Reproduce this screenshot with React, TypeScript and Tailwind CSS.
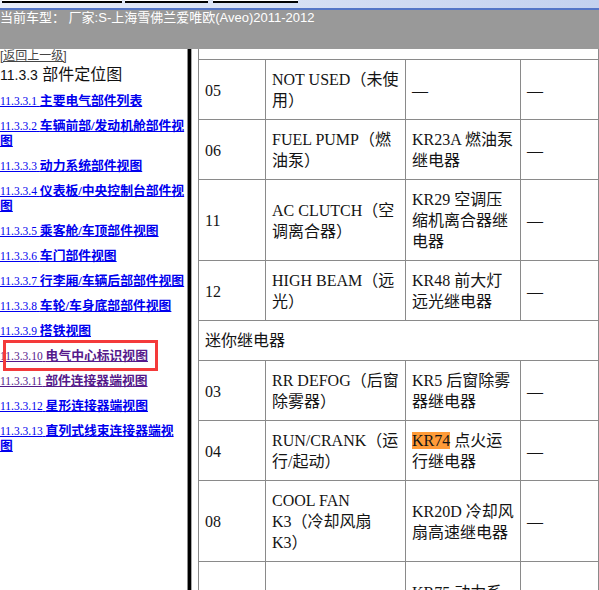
import React from 'react'

type TableRow =
  | { section: string }
  | {
      no: string
      name: string[]
      relay: string[]
      spare: string
      mark?: string
      tall?: boolean
    }

interface NavLink {
  no: string
  lines: string[]
  visited?: boolean
}

const links: NavLink[] = [
  { no: '11.3.3.1', lines: ['主要电气部件列表'] },
  { no: '11.3.3.2', lines: ['车辆前部/发动机舱部件视', '图'] },
  { no: '11.3.3.3', lines: ['动力系统部件视图'] },
  { no: '11.3.3.4', lines: ['仪表板/中央控制台部件视', '图'] },
  { no: '11.3.3.5', lines: ['乘客舱/车顶部件视图'] },
  { no: '11.3.3.6', lines: ['车门部件视图'] },
  { no: '11.3.3.7', lines: ['行李厢/车辆后部部件视图'] },
  { no: '11.3.3.8', lines: ['车轮/车身底部部件视图'] },
  { no: '11.3.3.9', lines: ['搭铁视图'] },
  { no: '11.3.3.10', lines: ['电气中心标识视图'], visited: true },
  { no: '11.3.3.11', lines: ['部件连接器端视图'], visited: true },
  { no: '11.3.3.12', lines: ['星形连接器端视图'] },
  { no: '11.3.3.13', lines: ['直列式线束连接器端视', '图'] }
]

const rows: TableRow[] = [
  { section: '微型继电器' },
  { no: '05', name: ['NOT USED（未使', '用）'], relay: ['—'], spare: '—' },
  { no: '06', name: ['FUEL PUMP（燃', '油泵）'], relay: ['KR23A 燃油泵', '继电器'], spare: '—' },
  { no: '11', name: ['AC CLUTCH（空', '调离合器）'], relay: ['KR29 空调压', '缩机离合器继', '电器'], spare: '—' },
  { no: '12', name: ['HIGH BEAM（远', '光）'], relay: ['KR48 前大灯', '远光继电器'], spare: '—' },
  { section: '迷你继电器' },
  { no: '03', name: ['RR DEFOG（后窗', '除雾器）'], relay: ['KR5 后窗除雾', '器继电器'], spare: '—' },
  { no: '04', name: ['RUN/CRANK（运', '行/起动）'], relay: ['KR74 点火运', '行继电器'], spare: '—', mark: 'KR74' },
  { no: '08', name: ['COOL FAN', 'K3（冷却风扇', 'K3）'], relay: ['KR20D 冷却风', '扇高速继电器'], spare: '—' },
  { no: '07', name: ['PT（动力系统）'], relay: ['KR75 动力系', '统继电器'], spare: '—', tall: true }
]

const cell = 'border border-[#8a8a8a] px-[6px] pt-[9px] pb-[8px] align-middle'

function Lines({ lines, mark }: { lines: string[]; mark?: string }) {
  return (
    <>
      {lines.map((line, i) => (
        <div key={i} className="whitespace-nowrap">
          {mark && line.startsWith(mark) ? (
            <>
              <span className="bg-[#ff9b38]">{mark}</span>
              {line.slice(mark.length)}
            </>
          ) : (
            line
          )}
        </div>
      ))}
    </>
  )
}

export default function App() {
  return (
    <div className="flex h-[590px] w-[599px] flex-col overflow-hidden bg-white">
      {/* window chrome */}
      <div className="h-[8px] bg-linear-to-r from-[#e9edf8] to-[#c3d1ef]">
        <div className="flex h-[3px]">
          <div className="ml-[2px] w-[120px] border-b-2 border-black bg-white" />
          <div className="ml-[3px] w-[83px] border-b-2 border-black bg-white" />
          <div className="ml-[5px] w-[85px] border-b-2 border-black bg-white" />
        </div>
      </div>
      <div className="h-[2px] bg-[#5475c6]" />

      {/* vehicle header */}
      <div className="h-[39px] bg-[#999999] font-['Liberation_Sans','Noto_Sans_CJK_SC',sans-serif] text-[13px] leading-[16px] text-white">
        当前车型： 厂家:S-上海雪佛兰爱唯欧(Aveo)2011-2012
      </div>

      <div className="flex min-h-0 flex-1">
        {/* section nav */}
        <div className="relative w-[187px] shrink-0 overflow-hidden">
          <a
            href="#"
            className="block font-['Liberation_Sans','Noto_Sans_CJK_SC',sans-serif] text-[12px] leading-[14px] text-[#444] underline"
          >
            [返回上一级]
          </a>
          <div className="mt-[2px] font-['Liberation_Sans','Noto_Sans_CJK_SC',sans-serif] text-[16px] leading-[20px] text-[#111]">
            <span className="text-[14px]">11.3.3</span> 部件定位图
          </div>
          <div className="mt-[9px] flex flex-col gap-[10px] font-['Liberation_Serif','Noto_Sans_CJK_SC',serif] text-[12.8px] leading-[15px]">
            {links.map(link => (
              <a
                key={link.no}
                href="#"
                className={'block underline ' + (link.visited ? 'text-[#551a8b]' : 'text-[#0000ee]')}
              >
                {link.lines.map((line, i) => (
                  <div key={i} className="h-[15px] whitespace-nowrap">
                    {i === 0 && <span className="text-[11.5px]">{link.no} </span>}
                    <span className="font-bold">{line}</span>
                  </div>
                ))}
              </a>
            ))}
          </div>
          {/* highlight frame around the current entry */}
          <div className="pointer-events-none absolute left-[3px] top-[291px] h-[31px] w-[155px] border-[3px] border-[#f43a3a]" />
        </div>

        {/* frame splitter */}
        <div className="w-px shrink-0 bg-[#8c8c8c]" />
        <div className="w-[3px] shrink-0 bg-black" />
        <div className="w-px shrink-0 bg-[#a8a8a8]" />

        {/* relay table */}
        <div className="min-w-0 flex-1 overflow-hidden pl-[6px]">
          <table className="-mt-[30px] w-[400px] table-fixed border-collapse font-['Liberation_Serif','Noto_Sans_CJK_SC',serif] text-[16px] leading-[21px] text-[#141414]">
            <colgroup>
              <col className="w-[67px]" />
              <col className="w-[140px]" />
              <col className="w-[115px]" />
              <col className="w-[78px]" />
            </colgroup>
            <tbody>
              {rows.map((row, i) =>
                'section' in row ? (
                  <tr key={i}>
                    <td colSpan={4} className="border border-[#8a8a8a] px-[6px] py-[9px]">
                      {row.section}
                    </td>
                  </tr>
                ) : (
                  <tr key={i} className={row.tall ? 'h-[81px]' : ''}>
                    <td className={cell}>{row.no}</td>
                    <td className={cell}>
                      <Lines lines={row.name} />
                    </td>
                    <td className={cell}>
                      <Lines lines={row.relay} mark={row.mark} />
                    </td>
                    <td className={cell}>{row.spare}</td>
                  </tr>
                )
              )}
            </tbody>
          </table>
        </div>
      </div>
    </div>
  )
}
